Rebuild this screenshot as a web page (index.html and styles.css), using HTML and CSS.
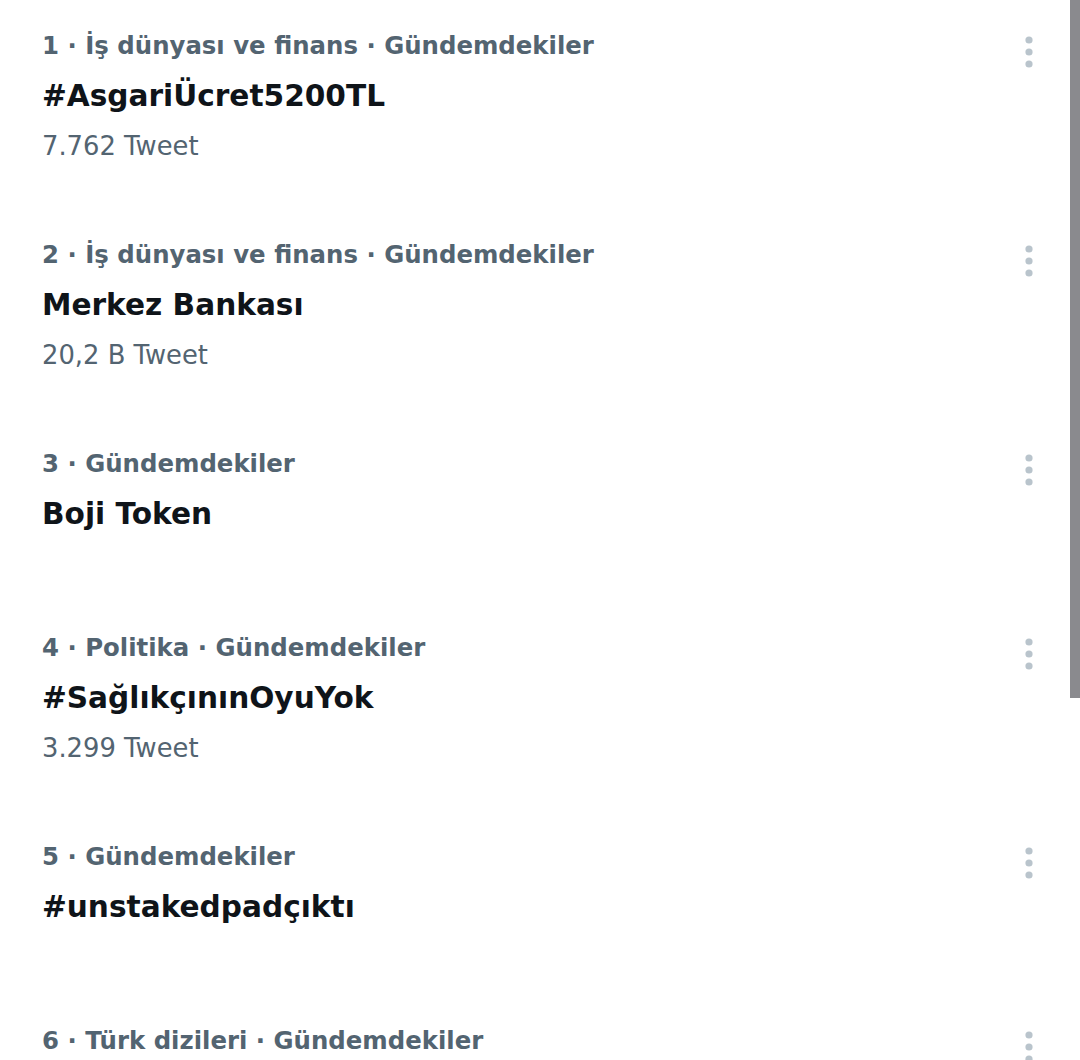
FILE: index.html
```html
<!DOCTYPE html>
<html lang="tr">
<head>
    <meta charset="UTF-8">
    <meta name="viewport" content="width=device-width, initial-scale=1.0">
    <title>Gündem</title>
    <link rel="stylesheet" href="styles.css">
</head>
<body>
    <!-- Trend list -->
    <div class="trends">
        <div class="trend">
            <div class="trend-info">
                <div class="trend-meta">1 · İş dünyası ve finans · Gündemdekiler</div>
                <div class="trend-name">#AsgariÜcret5200TL</div>
                <div class="trend-count">7.762 Tweet</div>
            </div>
            <svg class="more" viewBox="0 0 14 34" width="14" height="34"><circle cx="7" cy="5" r="3.6"/><circle cx="7" cy="17" r="3.6"/><circle cx="7" cy="29" r="3.6"/></svg>
        </div>

        <div class="trend">
            <div class="trend-info">
                <div class="trend-meta">2 · İş dünyası ve finans · Gündemdekiler</div>
                <div class="trend-name">Merkez Bankası</div>
                <div class="trend-count">20,2 B Tweet</div>
            </div>
            <svg class="more" viewBox="0 0 14 34" width="14" height="34"><circle cx="7" cy="5" r="3.6"/><circle cx="7" cy="17" r="3.6"/><circle cx="7" cy="29" r="3.6"/></svg>
        </div>

        <div class="trend">
            <div class="trend-info">
                <div class="trend-meta">3 · Gündemdekiler</div>
                <div class="trend-name">Boji Token</div>
            </div>
            <svg class="more" viewBox="0 0 14 34" width="14" height="34"><circle cx="7" cy="5" r="3.6"/><circle cx="7" cy="17" r="3.6"/><circle cx="7" cy="29" r="3.6"/></svg>
        </div>

        <div class="trend">
            <div class="trend-info">
                <div class="trend-meta">4 · Politika · Gündemdekiler</div>
                <div class="trend-name">#SağlıkçınınOyuYok</div>
                <div class="trend-count">3.299 Tweet</div>
            </div>
            <svg class="more" viewBox="0 0 14 34" width="14" height="34"><circle cx="7" cy="5" r="3.6"/><circle cx="7" cy="17" r="3.6"/><circle cx="7" cy="29" r="3.6"/></svg>
        </div>

        <div class="trend">
            <div class="trend-info">
                <div class="trend-meta">5 · Gündemdekiler</div>
                <div class="trend-name">#unstakedpadçıktı</div>
            </div>
            <svg class="more" viewBox="0 0 14 34" width="14" height="34"><circle cx="7" cy="5" r="3.6"/><circle cx="7" cy="17" r="3.6"/><circle cx="7" cy="29" r="3.6"/></svg>
        </div>

        <div class="trend">
            <div class="trend-info">
                <div class="trend-meta">6 · Türk dizileri · Gündemdekiler</div>
            </div>
            <svg class="more" viewBox="0 0 14 34" width="14" height="34"><circle cx="7" cy="5" r="3.6"/><circle cx="7" cy="17" r="3.6"/><circle cx="7" cy="29" r="3.6"/></svg>
        </div>
    </div>

    <!-- overlay scrollbar -->
    <div class="scrollbar"></div>
</body>
</html>
```

FILE: styles.css
```css
html, body {
    margin: 0;
    padding: 0;
    height: 100%;
    overflow: hidden;
}
body {
    font-family: "DejaVu Sans", "Noto Sans", sans-serif;
    background-color: #ffffff;
    position: relative;
}
.trends {
    display: flex;
    flex-direction: column;
}
.trend {
    display: flex;
    justify-content: space-between;
    align-items: flex-start;
    box-sizing: border-box;
    min-height: 184px;
    padding: 21px 44px 38px 42px;
}
.trend-meta {
    font-size: 24.4px;
    font-weight: 700;
    line-height: 50px;
    color: #536471;
}
.trend-name {
    font-size: 29.6px;
    font-weight: 700;
    line-height: 50px;
    color: #0f1419;
}
.trend-count {
    font-size: 25.8px;
    font-weight: 400;
    line-height: 50px;
    color: #536471;
}
.more {
    fill: #b9c4cc;
    margin-top: 14px;
    flex-shrink: 0;
}
.scrollbar {
    position: absolute;
    top: 0;
    right: 0;
    width: 10px;
    height: 698px;
    background-color: #8a8a8e;
}
```
